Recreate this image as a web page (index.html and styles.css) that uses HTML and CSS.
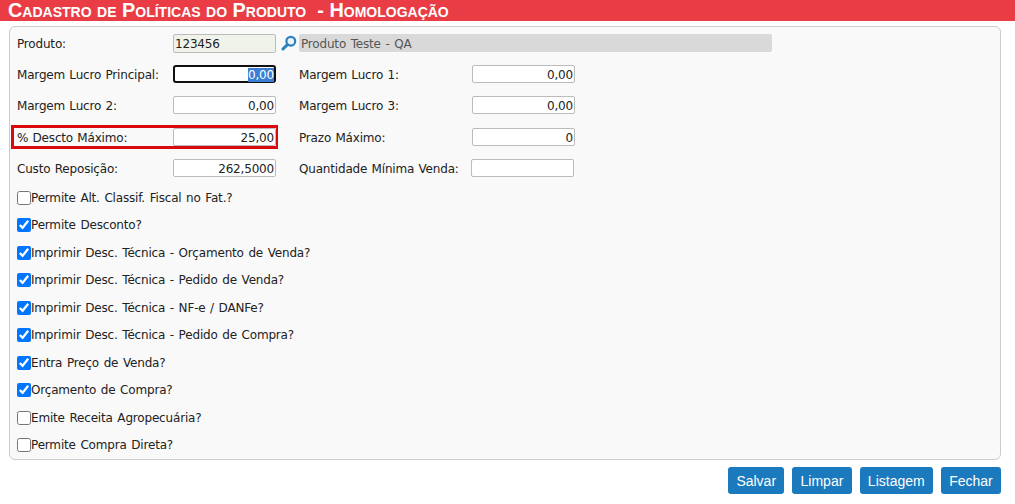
FILE: index.html
```html
<!DOCTYPE html>
<html lang="pt-BR">
<head>
<meta charset="utf-8">
<title>Cadastro de Políticas do Produto</title>
<link rel="stylesheet" href="styles.css">
</head>
<body>
<header class="title-bar">Cadastro de Políticas do Produto &nbsp;- Homologação</header>
<main class="panel">
  <div class="row row-product">
    <label class="label">Produto:</label>
    <input class="field field-code" value="123456" readonly>
    <svg class="lookup" viewBox="0 0 16 16" width="16" height="16" aria-hidden="true">
      <circle cx="9.8" cy="6.2" r="4.4" fill="#e8f3fb" stroke="#2a7fbd" stroke-width="2.2"/>
      <path d="M6.4 9.6 2 14" stroke="#2a7fbd" stroke-width="3" stroke-linecap="round"/>
    </svg>
    <input class="field field-desc" value="Produto Teste - QA" readonly>
  </div>
  <div class="row row-a">
    <div class="cell"><label class="label">Margem Lucro Principal:</label><span class="field field-num field-focus"><span class="selected">0,00</span></span></div>
    <label class="label label-2">Margem Lucro 1:</label><input class="field field-num" value="0,00">
  </div>
  <div class="row row-b">
    <div class="cell"><label class="label">Margem Lucro 2:</label><input class="field field-num" value="0,00"></div>
    <label class="label label-2">Margem Lucro 3:</label><input class="field field-num" value="0,00">
  </div>
  <div class="row row-c">
    <div class="cell cell-marked"><label class="label">% Descto Máximo:</label><input class="field field-num" value="25,00"></div>
    <label class="label label-2">Prazo Máximo:</label><input class="field field-num" value="0">
  </div>
  <div class="row row-d">
    <div class="cell"><label class="label">Custo Reposição:</label><input class="field field-num" value="262,5000"></div>
    <label class="label label-2 label-qty">Quantidade Mínima Venda:</label><input class="field field-num" value="">
  </div>
  <div class="checks">
    <label class="check"><input type="checkbox">Permite Alt. Classif. Fiscal no Fat.?</label>
    <label class="check"><input type="checkbox" checked>Permite Desconto?</label>
    <label class="check"><input type="checkbox" checked>Imprimir Desc. Técnica - Orçamento de Venda?</label>
    <label class="check"><input type="checkbox" checked>Imprimir Desc. Técnica - Pedido de Venda?</label>
    <label class="check"><input type="checkbox" checked>Imprimir Desc. Técnica - NF-e / DANFe?</label>
    <label class="check"><input type="checkbox" checked>Imprimir Desc. Técnica - Pedido de Compra?</label>
    <label class="check"><input type="checkbox" checked>Entra Preço de Venda?</label>
    <label class="check"><input type="checkbox" checked>Orçamento de Compra?</label>
    <label class="check"><input type="checkbox">Emite Receita Agropecuária?</label>
    <label class="check"><input type="checkbox">Permite Compra Direta?</label>
  </div>
</main>
<footer class="actions">
  <button class="btn" type="button">Salvar</button>
  <button class="btn" type="button">Limpar</button>
  <button class="btn" type="button">Listagem</button>
  <button class="btn" type="button">Fechar</button>
</footer>
</body>
</html>
```
FILE: styles.css
```css
* { box-sizing: border-box; }
html, body { margin: 0; padding: 0; background: #fff; }
body {
  width: 1015px;
  height: 504px;
  overflow: hidden;
  font-family: "DejaVu Sans", Verdana, sans-serif;
  font-size: 12px;
  color: #222;
}
.title-bar {
  height: 21px;
  background: #e93c45;
  color: #fff;
  font-family: "Liberation Sans", Arial, sans-serif;
  font-weight: 700;
  font-size: 19.85px;
  line-height: 20px;
  font-variant: small-caps;
  padding-left: 8px;
  white-space: pre;
}
.panel {
  margin: 5px 14px 0 9px;
  height: 434px;
  background: #f9f9f9;
  border: 1px solid #ccc;
  border-radius: 6px;
  padding: 6px 7px 0;
}
.row { display: flex; align-items: center; height: 20px; }
.row-a, .row-b, .row-d { margin-top: 11px; }
.row-c { margin-top: 12px; }
.cell { display: flex; align-items: center; height: 20px; }
.cell-marked {
  height: 24px;
  margin: 0 -2px 0 -6px;
  padding-left: 3px;
  border: solid #d9090f;
  border-width: 3px 2px 3px 3px;
}
.label {
  display: block;
  width: 156px;
  padding-top: 2px;
  white-space: nowrap;
  letter-spacing: -0.18px;
  word-spacing: 0.7px;
}
.label-2 { width: 173px; margin-left: 23px; }
.label-qty { width: 172px; }
.field {
  display: block;
  width: 103px;
  height: 18px;
  padding: 2px 1px 0 2px;
  border: 1px solid #bbb;
  border-radius: 2px;
  background: #fff;
  color: #222;
  font: 12px/14px "DejaVu Sans", Verdana, sans-serif;
  letter-spacing: -0.18px;
  word-spacing: 1px;
  outline: none;
}
.field-num { text-align: right; }
.field-code { background: #f0f3ea; height: 19px; padding-left: 1px; }
.lookup { margin-left: 5px; flex: none; }
.field-desc {
  width: 473px;
  margin-left: 2px;
  background: #d9d9d9;
  border: none;
  color: #555;
}
.field-focus { border: 2px solid #101010; border-radius: 3px; padding: 1px 0 0 0; }
.selected { background: #3a7fd5; color: #fff; }
.checks { display: flex; flex-direction: column; margin-top: 6px; }
.check {
  display: flex;
  align-items: center;
  height: 27.5px;
  letter-spacing: -0.18px;
  word-spacing: 1px;
  white-space: nowrap;
}
.check input { width: 14px; height: 14px; margin: 0; flex: none; }
.actions { display: flex; justify-content: flex-end; gap: 8px; padding: 7px 14px 0 0; }
.btn {
  height: 27px;
  padding: 0 8.25px;
  background: #1b79bd;
  border: none;
  border-radius: 3px;
  color: #fff;
  font: 14px "Liberation Sans", Arial, sans-serif;
}
```
